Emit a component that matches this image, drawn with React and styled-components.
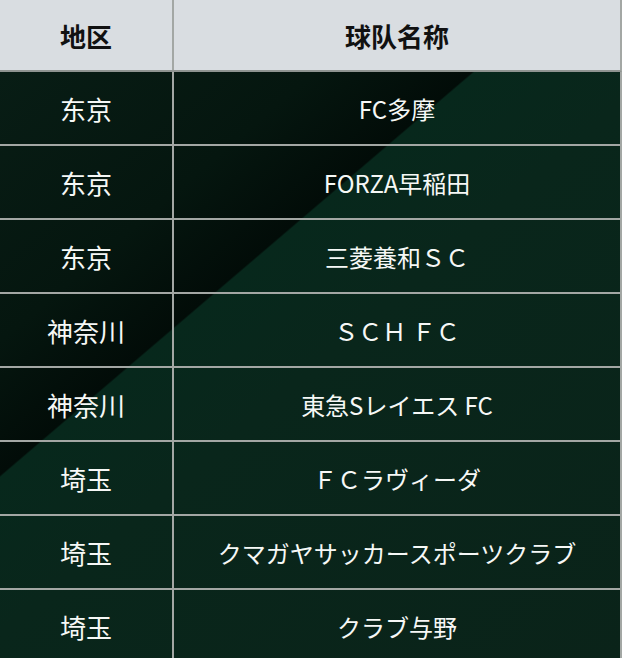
import React from 'react'
import styled, {createGlobalStyle} from 'styled-components'

const Global = createGlobalStyle`
	html, body {
		margin: 0;
		padding: 0;
		overflow: hidden;
		background: #0a2219;
	}
	body {
		font-family: "Noto Sans CJK JP", "Noto Sans", sans-serif;
	}
`

const Table = styled.div`
	width: 622px;
	height: 658px;
	overflow: hidden;
	display: flex;
	flex-direction: column;
`

const Row = styled.div`
	display: grid;
	grid-template-columns: 172px 1fr;
	height: ${p => p.head ? '70px' : '72px'};
	flex: none;
	border-bottom: 2px solid ${p => p.head ? '#8f9491' : '#a3a7a4'};
	border-right: 2px solid #a3a7a4;
	background: ${p => p.head ? '#d9dde1' : 'transparent'};
`

const Body = styled.div`
	flex: 1;
	background: linear-gradient(139.5deg,
		#081d15 0%,
		#05160f 24%,
		#020c08 35.9%,
		#07281c 36.1%,
		#09261b 50%,
		#0a2319 100%);
`

const Cell = styled.div`
	display: flex;
	align-items: center;
	justify-content: center;
	font-family: ${p => p.zh ? '"Noto Sans CJK SC"' : '"Noto Sans CJK JP"'}, sans-serif;
	font-size: ${p => p.zh ? '26px' : '24px'};
	font-weight: ${p => p.head ? 700 : 400};
	color: ${p => p.head ? '#111' : '#f6f8f6'};
	white-space: nowrap;
	& + & {
		border-left: 2px solid ${p => p.head ? '#8f9491' : '#a3a7a4'};
	}
`

const rows = [
	['东京', 'FC多摩'],
	['东京', 'FORZA早稲田'],
	['东京', '三菱養和ＳＣ'],
	['神奈川', 'ＳＣＨ ＦＣ'],
	['神奈川', '東急Sレイエス FC'],
	['埼玉', 'ＦＣラヴィーダ'],
	['埼玉', 'クマガヤサッカースポーツクラブ'],
	['埼玉', 'クラブ与野'],
]

export default function App(){
	return(
		<>
			<Global/>
			<Table>
				<Row head>
					<Cell head zh>地区</Cell>
					<Cell head zh>球队名称</Cell>
				</Row>
				<Body>
					{rows.map((r, i) => (
						<Row key={i}>
							<Cell zh>{r[0]}</Cell>
							<Cell>{r[1]}</Cell>
						</Row>
					))}
				</Body>
			</Table>
		</>
	)
}
